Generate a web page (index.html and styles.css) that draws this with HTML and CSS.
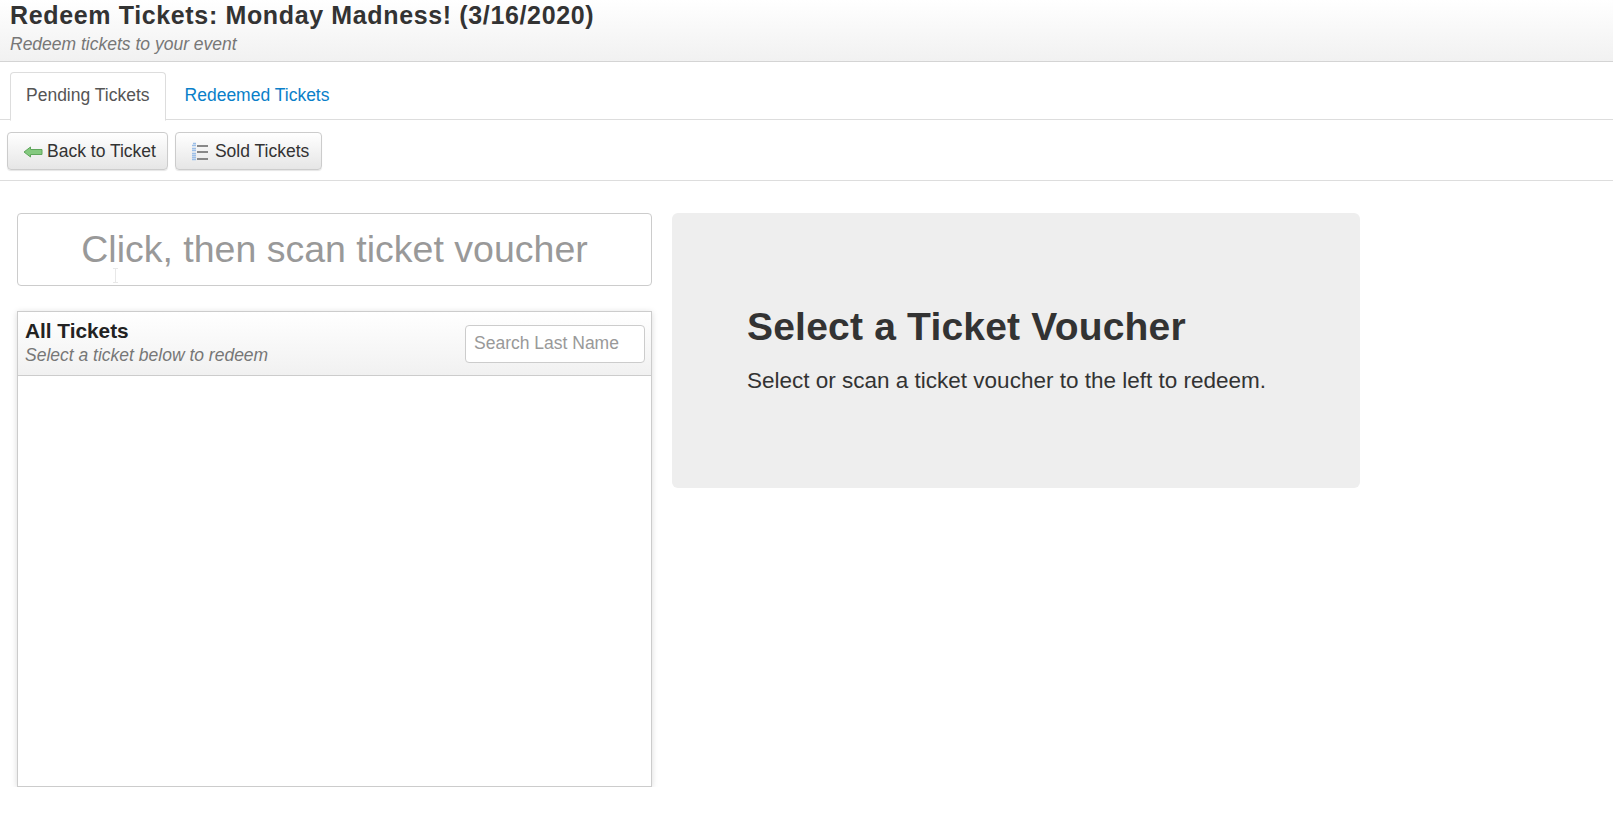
FILE: index.html
```html
<!DOCTYPE html>
<html lang="en">
<head>
    <meta charset="UTF-8">
    <title>Redeem Tickets</title>
    <link rel="stylesheet" href="styles.css">
</head>
<body>
    <div class="page-header">
        <h1>Redeem Tickets: Monday Madness! (3/16/2020)</h1>
        <div class="subtitle">Redeem tickets to your event</div>
    </div>

    <ul class="tabs">
        <li class="tab active">Pending Tickets</li>
        <li class="tab">Redeemed Tickets</li>
    </ul>

    <div class="toolbar">
        <button class="button">
            <svg class="icon" width="20" height="16" viewBox="0 0 20 16">
                <path d="M1 8 L7.5 3 V5.5 H19 V10.5 H7.5 V13 Z" fill="#84c97f" stroke="#5fa65b" stroke-width="1"/>
            </svg>
            Back to Ticket
        </button>
        <button class="button sold">
            <svg class="icon list-icon" width="18" height="20" viewBox="0 0 18 20">
                <path d="M2 1.5 H5 M1 3.5 H5 M1 6.5 H5 M1 8.5 H5 M1 11.5 H5 M1 13.5 H5 M1 15.5 H5 M1 17.5 H5" stroke="#9dbfe8" stroke-width="1.3"/>
                <path d="M6 4 H17 M6 10 H17 M6 17 H17" stroke="#666" stroke-width="1.5"/>
            </svg>
            Sold Tickets
        </button>
    </div>

    <div class="content">
        <div class="left-col">
            <div class="scan-box">
                <input class="scan-input" type="text" placeholder="Click, then scan ticket voucher">
                <svg class="cursor" width="7" height="15" viewBox="0 0 7 15">
                    <path d="M1 .5 H6 M3.5 .5 V14.5 M1 14.5 H6" stroke="#e8e8e8" fill="none"/>
                </svg>
            </div>

            <div class="panel">
                <div class="panel-head">
                    <div>
                        <div class="panel-title">All Tickets</div>
                        <div class="panel-sub">Select a ticket below to redeem</div>
                    </div>
                    <input class="search" type="text" placeholder="Search Last Name">
                </div>
                <div class="panel-body"></div>
            </div>
        </div>

        <div class="voucher">
            <h2>Select a Ticket Voucher</h2>
            <p>Select or scan a ticket voucher to the left to redeem.</p>
        </div>
    </div>
</body>
</html>
```

FILE: styles.css
```css
body {
    font-family: "Liberation Sans", Arial, sans-serif;
    margin: 0;
    padding: 0;
    background-color: #fff;
    color: #333;
}
.page-header {
    box-sizing: border-box;
    padding: 0 10px;
    background: linear-gradient(#fff, #f1f1f1);
    border-bottom: 1px solid #d4d4d4;
    height: 62px;
}
h1 {
    margin: 0;
    padding-top: 1px;
    font-size: 25px;
    line-height: 29px;
    letter-spacing: .64px;
    font-weight: bold;
}
.subtitle {
    margin-top: 5px;
    font-size: 17.5px;
    line-height: 19px;
    font-style: italic;
    color: #777;
}
.tabs {
    display: flex;
    gap: 3px;
    list-style: none;
    margin: 10px 0 0;
    padding: 0 0 0 10px;
    height: 48px;
    box-sizing: border-box;
    border-bottom: 1px solid #ddd;
}
.tab {
    padding: 0 15px;
    height: 47px;
    line-height: 45px;
    font-size: 17.5px;
    color: #0a7fc9;
    border: 1px solid transparent;
    box-sizing: content-box;
}
.tab.active {
    color: #555;
    background: #fff;
    border-color: #ddd;
    border-bottom-color: #fff;
    border-radius: 4px 4px 0 0;
}
.toolbar {
    display: flex;
    gap: 7px;
    padding: 12px 7px 10px;
    border-bottom: 1px solid #ddd;
}
.button {
    display: flex;
    align-items: center;
    height: 38px;
    padding: 1px 11px 0 15px;
    font-family: inherit;
    font-size: 17.5px;
    color: #333;
    background: linear-gradient(#fff, #e6e6e6);
    border: 1px solid #ccc;
    border-radius: 4px;
    box-shadow: 0 1px 1px rgba(0, 0, 0, 0.1);
}
.sold {
    padding-right: 12px;
}
.icon {
    margin-right: 4px;
}
.list-icon {
    margin-right: 6px;
}
.content {
    display: flex;
    align-items: flex-start;
    gap: 20px;
    padding: 32px 0 0 17px;
}
.left-col {
    width: 635px;
}
.scan-box {
    position: relative;
    margin-bottom: 25px;
}
.scan-input {
    display: block;
    width: 100%;
    height: 73px;
    box-sizing: border-box;
    font-family: inherit;
    font-size: 37.5px;
    text-align: center;
    color: #333;
    border: 1px solid #ccc;
    border-radius: 4px;
    outline: none;
}
.scan-input::placeholder {
    color: #999;
    opacity: 1;
}
.cursor {
    position: absolute;
    left: 95px;
    top: 55px;
}
.panel {
    border: 1px solid #ccc;
    box-shadow: 0 1px 6px rgba(0, 0, 0, 0.15);
}
.panel-head {
    display: flex;
    justify-content: space-between;
    align-items: center;
    height: 64px;
    box-sizing: border-box;
    padding: 0 6px 0 7px;
    background: linear-gradient(#fff, #f1f1f1);
    border-bottom: 1px solid #ccc;
}
.panel-title {
    margin-top: -3px;
    font-size: 20.8px;
    line-height: 22px;
    font-weight: bold;
    color: #222;
}
.panel-sub {
    margin-top: 3px;
    font-size: 17.5px;
    line-height: 20px;
    font-style: italic;
    color: #777;
}
.search {
    width: 180px;
    height: 38px;
    box-sizing: border-box;
    padding: 0 8px;
    font-family: inherit;
    font-size: 17.5px;
    border: 1px solid #ccc;
    border-radius: 4px;
    outline: none;
}
.search::placeholder {
    color: #999;
    opacity: 1;
}
.panel-body {
    height: 410px;
    background: #fff;
}
.voucher {
    width: 688px;
    height: 275px;
    box-sizing: border-box;
    padding: 92px 0 0 75px;
    background: #eee;
    border-radius: 6px;
}
.voucher h2 {
    margin: 0;
    font-size: 39px;
    line-height: 43px;
    letter-spacing: .2px;
    font-weight: bold;
}
.voucher p {
    margin: 18px 0 0;
    font-size: 22.5px;
    line-height: 30px;
    color: #333;
}
```
